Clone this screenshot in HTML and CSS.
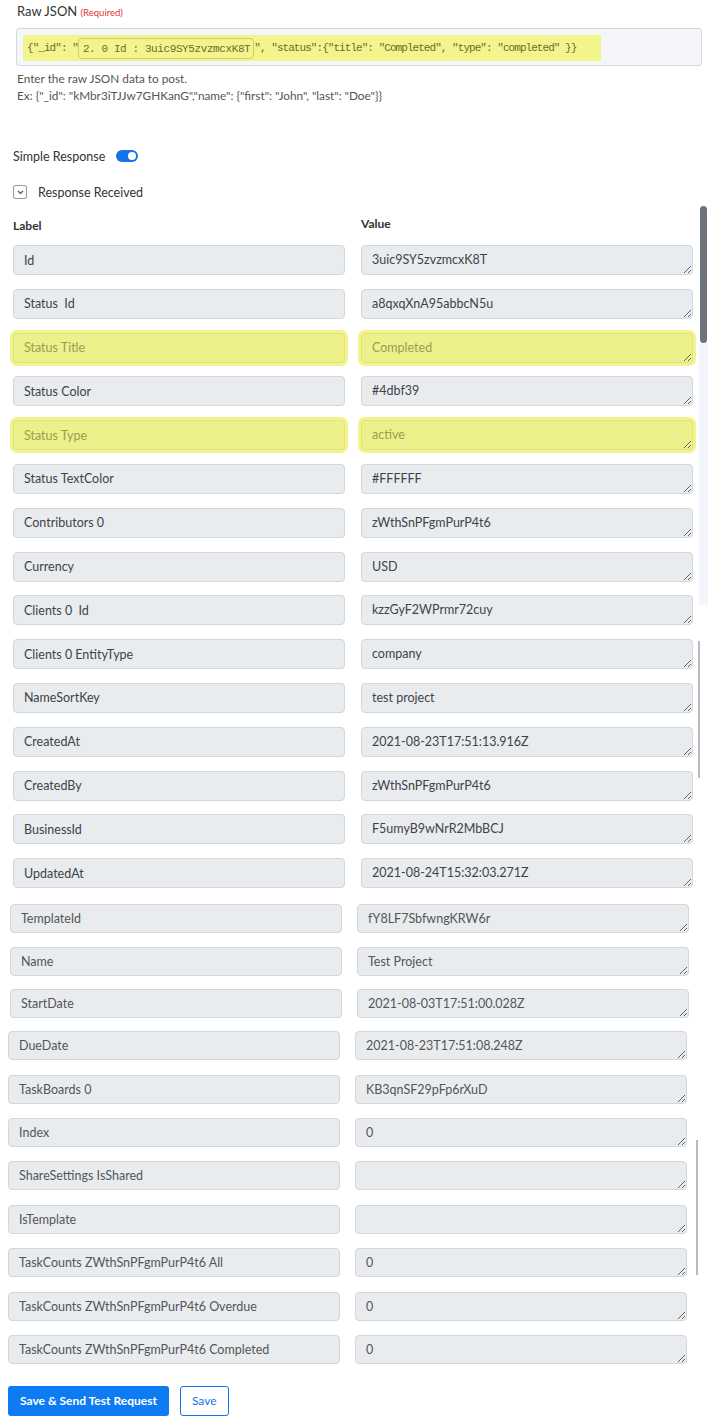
FILE: index.html
```html
<!DOCTYPE html>
<html lang="en">
<head>
  <meta charset="UTF-8">
  <meta name="viewport" content="width=device-width, initial-scale=1.0">
  <title>Raw JSON Request</title>
  <link rel="stylesheet" href="styles.css">
</head>
<body>
  <div class="field-group">
    <label class="field-label">Raw JSON <span class="required">(Required)</span></label>
    <div class="json-box">
      <div class="json-line">{"_id": "<span class="token">2. 0 Id : 3uic9SY5zvzmcxK8T</span>", "status":{"title": "Completed", "type": "completed" }}</div>
    </div>
    <p class="hint">Enter the raw JSON data to post.<br>Ex: {"_id": "kMbr3iTJJw7GHKanG","name": {"first": "John", "last": "Doe"}}</p>
  </div>

  <div class="simple-response">
    <span>Simple Response</span>
    <span class="switch"><span class="knob"></span></span>
  </div>

  <div class="collapse-head">
    <span class="chevron">
      <svg width="7" height="5" viewBox="0 0 7 5"><path d="M1 1l2.5 2.5L6 1" fill="none" stroke="#555" stroke-width="1.2"/></svg>
    </span>
    <span>Response Received</span>
  </div>

  <div class="panel">
    <div class="scroll-thumb"></div>
    <div class="scroll-track"></div>
    <div class="scroll-line line-a"></div>
    <div class="scroll-line line-b"></div>

    <div class="heads">
      <span>Label</span>
      <span>Value</span>
    </div>

    <div class="rows seg-1">
      <input class="field" readonly value="Id"><textarea class="field" readonly>3uic9SY5zvzmcxK8T</textarea>
      <input class="field" readonly value="Status  Id"><textarea class="field" readonly>a8qxqXnA95abbcN5u</textarea>
      <input class="field hl" readonly value="Status Title"><textarea class="field hl" readonly>Completed</textarea>
      <input class="field" readonly value="Status Color"><textarea class="field" readonly>#4dbf39</textarea>
      <input class="field hl" readonly value="Status Type"><textarea class="field hl" readonly>active</textarea>
      <input class="field" readonly value="Status TextColor"><textarea class="field" readonly>#FFFFFF</textarea>
      <input class="field" readonly value="Contributors 0"><textarea class="field" readonly>zWthSnPFgmPurP4t6</textarea>
      <input class="field" readonly value="Currency"><textarea class="field" readonly>USD</textarea>
      <input class="field" readonly value="Clients 0  Id"><textarea class="field" readonly>kzzGyF2WPrmr72cuy</textarea>
      <input class="field" readonly value="Clients 0 EntityType"><textarea class="field" readonly>company</textarea>
      <input class="field" readonly value="NameSortKey"><textarea class="field" readonly>test project</textarea>
      <input class="field" readonly value="CreatedAt"><textarea class="field" readonly>2021-08-23T17:51:13.916Z</textarea>
      <input class="field" readonly value="CreatedBy"><textarea class="field" readonly>zWthSnPFgmPurP4t6</textarea>
      <input class="field" readonly value="BusinessId"><textarea class="field" readonly>F5umyB9wNrR2MbBCJ</textarea>
      <input class="field" readonly value="UpdatedAt"><textarea class="field" readonly>2021-08-24T15:32:03.271Z</textarea>
    </div>

    <div class="rows seg-2">
      <input class="field" readonly value="TemplateId"><textarea class="field" readonly>fY8LF7SbfwngKRW6r</textarea>
      <input class="field" readonly value="Name"><textarea class="field" readonly>Test Project</textarea>
      <input class="field" readonly value="StartDate"><textarea class="field" readonly>2021-08-03T17:51:00.028Z</textarea>
    </div>

    <div class="rows seg-3">
      <input class="field" readonly value="DueDate"><textarea class="field" readonly>2021-08-23T17:51:08.248Z</textarea>
      <input class="field" readonly value="TaskBoards 0"><textarea class="field" readonly>KB3qnSF29pFp6rXuD</textarea>
      <input class="field" readonly value="Index"><textarea class="field" readonly>0</textarea>
      <input class="field" readonly value="ShareSettings IsShared"><textarea class="field" readonly></textarea>
      <input class="field" readonly value="IsTemplate"><textarea class="field" readonly></textarea>
      <input class="field" readonly value="TaskCounts ZWthSnPFgmPurP4t6 All"><textarea class="field" readonly>0</textarea>
      <input class="field" readonly value="TaskCounts ZWthSnPFgmPurP4t6 Overdue"><textarea class="field" readonly>0</textarea>
      <input class="field" readonly value="TaskCounts ZWthSnPFgmPurP4t6 Completed"><textarea class="field" readonly>0</textarea>
    </div>
  </div>

  <div class="actions">
    <button class="btn-primary">Save &amp; Send Test Request</button>
    <button class="btn-outline">Save</button>
  </div>
</body>
</html>
```

FILE: styles.css
```css
body {
  font-family: 'Lato', 'Open Sans', sans-serif;
  color: #333;
  background-color: #fff;
  margin: 0;
  padding: 0;
  width: 710px;
}

.field-group {
  padding: 3px 8px 0 16px;
}

.field-label {
  display: block;
  font-size: 13px;
  line-height: 16px;
  color: #333;
  margin-left: 1px;
}

.required {
  color: #e0342f;
  font-size: 9.5px;
}

.json-box {
  margin-top: 7px;
  height: 38px;
  background-color: #f4f6f9;
  border: 1px solid #d5d9de;
  border-radius: 3px;
  padding: 6px 0 0 6px;
  box-sizing: border-box;
}

.json-line {
  display: inline-flex;
  align-items: center;
  height: 26px;
  padding: 0 25px 0 4px;
  background-color: #f4f48c;
  font-family: 'Liberation Mono', monospace;
  font-size: 11px;
  letter-spacing: -0.95px;
  color: #6b6b32;
  white-space: pre;
}

.token {
  display: inline-block;
  height: 21px;
  line-height: 21px;
  padding: 0 3px 0 4px;
  border: 1px solid #cdcd72;
  border-radius: 4px;
  letter-spacing: -0.4px;
  box-sizing: border-box;
}

.hint {
  margin: 4px 0 0 1px;
  font-size: 11.8px;
  line-height: 17px;
  color: #555;
}

.simple-response {
  display: flex;
  align-items: center;
  gap: 11px;
  margin: 44px 0 0 13px;
  font-size: 12.5px;
  height: 16px;
}

.switch {
  position: relative;
  width: 22px;
  height: 12px;
  border-radius: 6px;
  background-color: #1673ec;
}

.knob {
  position: absolute;
  right: 2px;
  top: 2px;
  width: 8px;
  height: 8px;
  border-radius: 50%;
  background-color: #fff;
}

.collapse-head {
  display: flex;
  align-items: center;
  gap: 11px;
  margin: 21px 0 0 13px;
  font-size: 12.5px;
  height: 14px;
}

.chevron {
  display: flex;
  align-items: center;
  justify-content: center;
  width: 12px;
  height: 12px;
  border: 1px solid #9a9a9a;
  border-radius: 2px;
}

.panel {
  position: relative;
  margin-top: 10px;
  padding-top: 10px;
}

.heads {
  display: grid;
  grid-template-columns: 332px 332px;
  column-gap: 16px;
  padding-left: 13px;
  font-size: 12px;
  font-weight: bold;
  color: #333;
  line-height: 14px;
}

.heads span + span {
  margin-top: -2px;
}

.rows {
  display: grid;
  grid-template-columns: 332px 332px;
  column-gap: 16px;
  row-gap: 13.8px;
}

.seg-1 {
  padding: 12px 0 0 13px;
}

.seg-2 {
  padding: 16px 0 0 10px;
  column-gap: 15px;
  row-gap: 13.5px;
}

.seg-3 {
  padding: 13px 0 0 8px;
  column-gap: 15px;
  row-gap: 14.4px;
}

.field {
  display: block;
  width: 100%;
  height: 30px;
  margin: 0;
  padding: 6px 10px;
  font-family: inherit;
  font-size: 12.5px;
  line-height: 16px;
  color: #3f4249;
  background-color: #e9ecef;
  border: 1px solid #d3d6da;
  border-radius: 4px;
  box-sizing: border-box;
  outline: none;
  overflow: hidden;
}

.seg-2 .field,
.seg-3 .field {
  height: 29px;
  color: #555;
}

textarea.field {
  resize: vertical;
}

.field.hl {
  background-color: #eef08b;
  border-color: #e2e27e;
  color: #9c9c52;
  box-shadow: 0 0 0 3px #f3f38e;
}

/* scrollbar remnants of the inner response panel */
.scroll-thumb {
  position: absolute;
  right: 3px;
  top: -3px;
  width: 7px;
  height: 137px;
  border-radius: 4px;
  background-color: #6c737b;
}

.scroll-track {
  position: absolute;
  right: 2px;
  top: 134px;
  width: 9px;
  height: 262px;
  background-color: #f2f5fb;
}

.scroll-line {
  position: absolute;
  width: 2px;
  background-color: #b7bcc2;
}

.line-a {
  right: 10px;
  top: 432px;
  height: 137px;
}

.line-b {
  right: 12px;
  top: 931px;
  height: 135px;
}

.actions {
  display: flex;
  gap: 11px;
  padding: 22px 0 0 8px;
}

.btn-primary {
  height: 30px;
  padding: 0 12px;
  background-color: #0d7cf2;
  color: #fff;
  font-family: inherit;
  font-size: 12px;
  font-weight: bold;
  border: none;
  border-radius: 3px;
}

.btn-outline {
  height: 30px;
  padding: 0 11px;
  background-color: #fff;
  color: #1673ec;
  font-family: inherit;
  font-size: 12px;
  border: 1px solid #1673ec;
  border-radius: 3px;
}
```
